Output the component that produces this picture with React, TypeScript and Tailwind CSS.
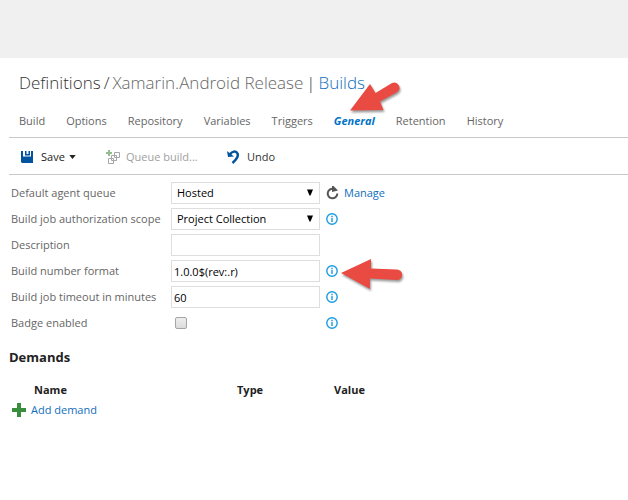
import React from "react";

const tabs = ["Build", "Options", "Repository", "Variables", "Triggers", "General", "Retention", "History"];

function InfoIcon() {
  return (
    <svg width="12" height="12" viewBox="0 0 12 12" fill="none" aria-hidden="true">
      <circle cx="6" cy="6" r="5.200" stroke="#1a9be0" strokeWidth="1.400" />
      <path d="M6 5v4M6 2.800v1.400" stroke="#1a9be0" strokeWidth="1.400" />
    </svg>
  );
}

function Info({ label }: { label: string }) {
  return (
    <button type="button" aria-label={label} className="ml-1.5 flex h-5 w-3 items-center">
      <InfoIcon />
    </button>
  );
}

function SelectBox({ id, value }: { id: string; value: string }) {
  return (
    <div className="relative w-[149px]">
      <select id={id} className="block h-[22px] w-full appearance-none border border-[#dedede] bg-white pl-[5px] pr-5 text-black outline-none">
        <option>{value}</option>
      </select>
      <svg className="pointer-events-none absolute right-1.5 top-[7px]" width="8" height="7" viewBox="0 0 8 7" aria-hidden="true">
        <path d="M1 0.5h6L4.500 6.500h-1z" fill="#000" />
      </svg>
    </div>
  );
}

function TextBox({ id, value }: { id: string; value: string }) {
  return (
    <input id={id} type="text" defaultValue={value} className="block h-[22px] w-[149px] border border-[#dedede] bg-white px-0.5 text-black outline-none" />
  );
}

function Row({ id, label, children }: { id: string; label: string; children: React.ReactNode }) {
  return (
    <div className="flex h-[26px] items-center">
      <label htmlFor={id} className="w-40 shrink-0 whitespace-nowrap text-[#666]">
        {label}
      </label>
      {children}
    </div>
  );
}

export default function App() {
  return (
    <div className="min-h-screen bg-white font-['Open_Sans','Noto_Sans',sans-serif] text-[11px] leading-4 text-[#666]">
      <div className="h-[58px] bg-[#f0f0f0]" />
      <main className="pl-[9px]">
        <h1 className="flex h-[50px] items-center gap-[3px] whitespace-nowrap pl-2.5 text-[17px] font-light">
          <span className="text-[#333]">Definitions</span>
          <span className="text-[#333]">/</span>
          <span className="text-[#666]">Xamarin.Android Release</span>
          <span className="text-[#333]">|</span>
          <a href="#builds" className="text-[#106ebe]">Builds</a>
        </h1>

        <nav className="flex h-[30px] items-center gap-[21px] border-b border-[#c8c8c8] pb-[3px] pl-2.5">
          {tabs.map((tab) =>
            tab === "General" ? (
              <a key={tab} href="#general" className="relative font-bold italic text-[#0072c6]">
                {tab}
                <svg className="pointer-events-none absolute bottom-2.5 left-4 h-[42px] w-[56px] drop-shadow-[1px_2px_1px_rgba(0,0,0,0.4)]" viewBox="0 0 56 42" aria-hidden="true">
                  <path d="M0 33.500L20 7l5.500 9L42 6a5.300 5.300 0 0 1 5 9.300L30 24.500l3.500 8.500z" fill="#e94b43" />
                </svg>
              </a>
            ) : (
              <a key={tab} href={"#" + tab.toLowerCase()}>{tab}</a>
            ),
          )}
        </nav>

        <div className="flex h-[37px] items-center border-b border-[#c8c8c8] pl-3 pt-px" role="toolbar">
          <button type="button" className="flex w-[85px] items-center text-[#222]">
            <svg width="12" height="12" viewBox="0 0 12 12" className="mr-2" aria-hidden="true">
              <path d="M0 0h2v5.500h8V0h2v12H1L0 11zM4 0h1.500v3h2V0H9v4.500H4z" fill="#00539c" />
            </svg>
            Save
            <svg width="7" height="4" viewBox="0 0 8 5" className="ml-1" aria-hidden="true">
              <path d="M0 0h8L4 5z" fill="#222" />
            </svg>
          </button>
          <button type="button" disabled className="flex w-[121px] items-center whitespace-nowrap text-[#a0a0a0]">
            <svg width="14" height="14" viewBox="0 0 14 14" className="mr-1.5" fill="none" aria-hidden="true">
              <path d="M8.500 2.500h5v5h-5zM5.500 5.500h5v5h-5zM2.500 8.500h5v5h-5z" stroke="#a7a7a7" fill="#fff" />
              <path d="M0 3h6M3 0v6" stroke="#92bd91" strokeWidth="2" />
            </svg>
            Queue build...
          </button>
          <button type="button" className="flex items-center text-[#333]">
            <svg width="13" height="14" viewBox="0 0 13 14" className="mr-[7px]" fill="none" aria-hidden="true">
              <path d="M0 1l1 6 6-.5z" fill="#00539c" />
              <path d="M2.500 5C5 1 9 .5 10.500 3.500C12 7 9 10 5.500 13" stroke="#00539c" strokeWidth="2.500" />
            </svg>
            Undo
          </button>
        </div>

        <form className="pl-0.5 pt-[5px]" onSubmit={(e) => e.preventDefault()}>
          <Row id="queue" label="Default agent queue">
            <SelectBox id="queue" value="Hosted" />
            <button type="button" aria-label="Refresh" className="ml-1.5">
              <svg width="13" height="14" viewBox="0 0 13 14" fill="none" aria-hidden="true">
                <path d="M11.300 7.500A4.800 4.800 0 1 1 7.500 2.800" stroke="#555" strokeWidth="2" />
                <path d="M6 0h1.500L12 4.500 6 6z" fill="#555" />
              </svg>
            </button>
            <a href="#manage" className="ml-[5px] text-[#106ebe]">Manage</a>
          </Row>
          <Row id="scope" label="Build job authorization scope">
            <SelectBox id="scope" value="Project Collection" />
            <Info label="About authorization scope" />
          </Row>
          <Row id="description" label="Description">
            <TextBox id="description" value="" />
          </Row>
          <Row id="format" label="Build number format">
            <TextBox id="format" value="1.0.0$(rev:.r)" />
            <div className="relative">
              <Info label="About build number format" />
              <svg className="pointer-events-none absolute left-5 top-[-5px] h-[36px] w-[66px] drop-shadow-[1px_2px_1px_rgba(0,0,0,0.4)]" viewBox="0 0 66 36" aria-hidden="true">
                <path d="M1 17L31 3v9.500L57 13.500a5.200 5.200 0 0 1 0 10.400L30 22.500V33z" fill="#e94b43" />
              </svg>
            </div>
          </Row>
          <Row id="timeout" label="Build job timeout in minutes">
            <TextBox id="timeout" value="60" />
            <Info label="About timeout" />
          </Row>
          <Row id="badge" label="Badge enabled">
            <div className="w-[149px] pl-1">
              <input id="badge" type="checkbox" className="block size-3 appearance-none rounded-xs border border-[#a5a5a5] bg-linear-to-b from-[#eee] to-[#dcdcdc]" />
            </div>
            <Info label="About badge" />
          </Row>
        </form>

        <section className="pt-[11px] text-[#222]">
          <h2 className="text-[13px] font-bold leading-5">Demands</h2>
          <table className="mt-[13px] table-fixed text-left">
            <thead>
              <tr className="h-5">
                <th className="w-[228px] pl-[25px] font-bold">Name</th>
                <th className="w-[97px] font-bold">Type</th>
                <th className="font-bold">Value</th>
              </tr>
            </thead>
          </table>
          <button type="button" className="ml-[3px] flex h-5 items-center gap-[5px] text-[#106ebe]">
            <svg width="14" height="14" viewBox="0 0 14 14" aria-hidden="true">
              <path d="M5 0h4v5h5v4H9v5H5V9H0V5h5z" fill="#388e3c" />
            </svg>
            Add demand
          </button>
        </section>
      </main>
    </div>
  );
}
